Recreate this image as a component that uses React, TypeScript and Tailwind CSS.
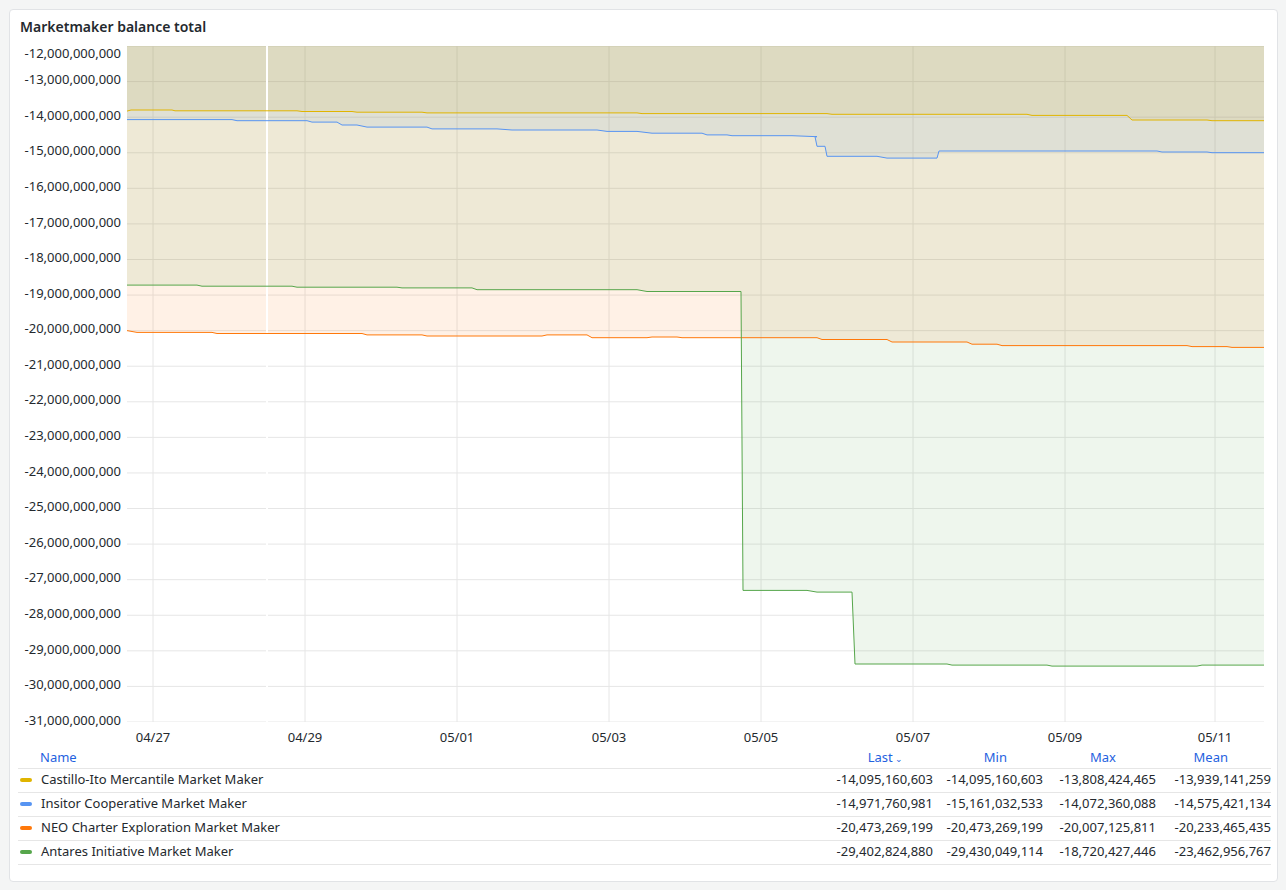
import React from 'react';

const W = 1137;
const H = 676;
const yOf = (v: number) => (-12 - v) * (H / 19);

type Pt = [number, number];

// x in plot pixels, v in billions; rendered as step line
const series: { name: string; color: string; pts: Pt[]; stats: string[] }[] = [
  {
    name: 'Castillo-Ito Mercantile Market Maker',
    color: '#e0b400',
    pts: [[0, -13.83], [4, -13.8], [45, -13.8], [48, -13.82], [170, -13.82], [175, -13.84], [225, -13.84], [230, -13.86], [295, -13.86], [300, -13.88], [510, -13.88], [515, -13.9], [700, -13.9], [705, -13.92], [900, -13.92], [905, -13.95], [1000, -13.95], [1005, -14.08], [1080, -14.08], [1085, -14.1], [1137, -14.1]],
    stats: ['-14,095,160,603', '-14,095,160,603', '-13,808,424,465', '-13,939,141,259'],
  },
  {
    name: 'Insitor Cooperative Market Maker',
    color: '#5794f2',
    pts: [[0, -14.07], [105, -14.07], [110, -14.1], [180, -14.1], [185, -14.14], [210, -14.14], [215, -14.22], [230, -14.22], [240, -14.28], [300, -14.28], [305, -14.33], [370, -14.33], [385, -14.36], [470, -14.36], [480, -14.4], [510, -14.4], [525, -14.45], [575, -14.45], [580, -14.5], [600, -14.5], [605, -14.52], [665, -14.52], [690, -14.55], [688, -14.55], [690, -14.82], [698, -14.82], [700, -15.1], [750, -15.1], [760, -15.15], [810, -15.15], [812, -14.95], [1030, -14.95], [1035, -14.98], [1080, -14.98], [1085, -15.0], [1137, -15.0]],
    stats: ['-14,971,760,981', '-15,161,032,533', '-14,072,360,088', '-14,575,421,134'],
  },
  {
    name: 'NEO Charter Exploration Market Maker',
    color: '#ff780a',
    pts: [[0, -20.0], [10, -20.05], [85, -20.05], [90, -20.08], [235, -20.08], [240, -20.12], [295, -20.12], [300, -20.15], [415, -20.15], [420, -20.12], [460, -20.12], [465, -20.2], [520, -20.2], [525, -20.18], [550, -20.18], [555, -20.2], [690, -20.2], [695, -20.25], [760, -20.25], [765, -20.32], [840, -20.32], [845, -20.38], [870, -20.38], [875, -20.42], [1060, -20.42], [1065, -20.45], [1100, -20.45], [1105, -20.47], [1137, -20.47]],
    stats: ['-20,473,269,199', '-20,473,269,199', '-20,007,125,811', '-20,233,465,435'],
  },
  {
    name: 'Antares Initiative Market Maker',
    color: '#56a64b',
    pts: [[0, -18.72], [70, -18.72], [75, -18.75], [165, -18.75], [170, -18.78], [270, -18.78], [275, -18.8], [345, -18.8], [350, -18.85], [510, -18.85], [520, -18.9], [614, -18.9], [616, -27.3], [680, -27.3], [690, -27.35], [725, -27.35], [728, -29.37], [820, -29.37], [825, -29.4], [920, -29.4], [925, -29.43], [1070, -29.43], [1075, -29.4], [1137, -29.4]],
    stats: ['-29,402,824,880', '-29,430,049,114', '-18,720,427,446', '-23,462,956,767'],
  },
];

const toPath = (pts: Pt[]) =>
  pts.map(([x, v], i) => `${i ? 'L' : 'M'}${x} ${yOf(v).toFixed(1)}`).join(' ');

const yTicks = Array.from({ length: 20 }, (_, i) => -12 - i);
const xTicks = [
  { x: 26, l: '04/27' },
  { x: 178, l: '04/29' },
  { x: 330, l: '05/01' },
  { x: 482, l: '05/03' },
  { x: 634, l: '05/05' },
  { x: 786, l: '05/07' },
  { x: 938, l: '05/09' },
  { x: 1088, l: '05/11' },
];

export default function App() {
  return (
    <div className="h-[890px] w-[1286px] bg-[#f4f5f5] p-[9px] pr-[8px] pb-[8px] font-['Inter','Noto_Sans',sans-serif] text-[#24292e]">
      <div className="flex h-full flex-col rounded-sm border border-[#e1e3e6] bg-white">
        <div className="px-[10px] pt-[7px] text-sm font-semibold">Marketmaker balance total</div>
        <div className="mt-[9px] flex">
          <div className="flex w-[117px] flex-col items-end pr-[6px] text-[13px] leading-none">
            {yTicks.map((t, i) => (
              <div key={t} className={`flex items-center ${i === 0 ? 'h-[18px] -mt-[2px]' : 'h-[35.58px]'}`}>
                {`-${Math.abs(t)},000,000,000`}
              </div>
            ))}
          </div>
          <div className="flex flex-col">
            <svg width={W} height={H} className="block">
              {yTicks.map(t => (
                <line key={t} x1={0} x2={W} y1={yOf(t)} y2={yOf(t)} stroke="#e6e6e6" strokeWidth={1} />
              ))}
              {xTicks.map(t => (
                <line key={t.l} x1={t.x} x2={t.x} y1={0} y2={H} stroke="#e6e6e6" strokeWidth={1} />
              ))}
              {series.map(s => (
                <path key={s.name + 'f'} d={`${toPath(s.pts)} L${W} 0 L0 0 Z`} fill={s.color} fillOpacity={0.1} />
              ))}
              <line x1={140} x2={140} y1={0} y2={H} stroke="white" strokeWidth={2} />
              {series.map(s => (
                <path key={s.name} d={toPath(s.pts)} fill="none" stroke={s.color} strokeWidth={1} />
              ))}
            </svg>
            <div className="relative h-[26px] text-[13px]">
              {xTicks.map(t => (
                <span key={t.l} className="absolute top-[6px] -translate-x-1/2" style={{ left: t.x }}>
                  {t.l}
                </span>
              ))}
            </div>
          </div>
        </div>
        <table className="mx-[8px] w-[1253px] text-[13px]">
          <thead>
            <tr className="h-[19px] text-[#1f62e0]">
              <th className="pl-[22px] text-left font-normal">Name</th>
              <th className="w-[110px] pr-[30px] text-right font-normal">Last<span className="text-[9px]"> ⌄</span></th>
              <th className="w-[110px] pr-[36px] text-right font-normal">Min</th>
              <th className="w-[113px] pr-[40px] text-right font-normal">Max</th>
              <th className="w-[115px] pr-[43px] text-right font-normal">Mean</th>
            </tr>
          </thead>
          <tbody>
            {series.map(s => (
              <tr key={s.name} className="h-[24px] border-t border-[#e6e6e6] last:border-b">
                <td>
                  <div className="flex items-center gap-[9px] pl-[2px]">
                    <span className="h-[4px] w-[12px] rounded-sm" style={{ background: s.color }} />
                    {s.name}
                  </div>
                </td>
                {s.stats.map((v, i) => (
                  <td key={i} className="text-right">{v}</td>
                ))}
              </tr>
            ))}
          </tbody>
        </table>
      </div>
    </div>
  );
}
